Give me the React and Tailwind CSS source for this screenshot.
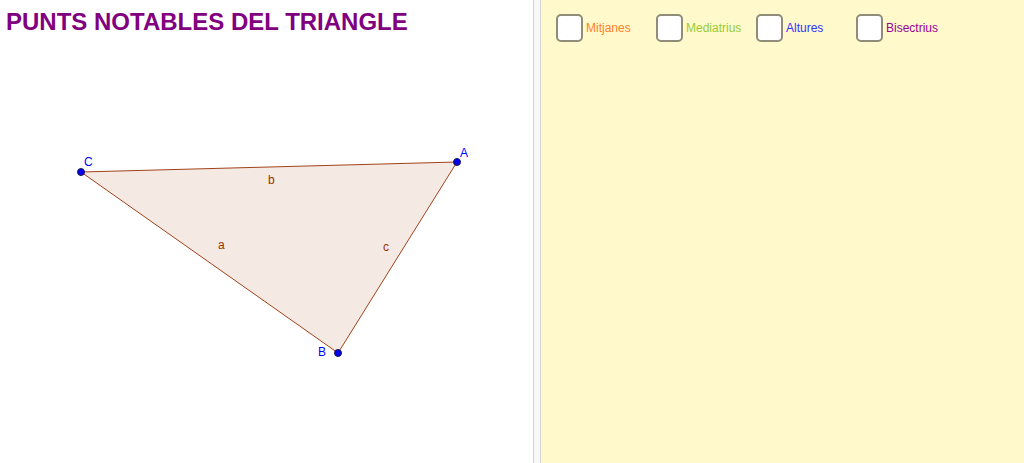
import React from "react";

const font = { fontFamily: '"Liberation Sans", Arial, sans-serif' };

const options = [
    { label: "Mitjanes", color: "text-[#ff7f2a]" },
    { label: "Mediatrius", color: "text-[#99cc33]" },
    { label: "Altures", color: "text-[#3333ff]" },
    { label: "Bisectrius", color: "text-[#990099]" },
];

function Triangle() {
    const A = [457, 162];
    const B = [338, 353];
    const C = [81, 172];
    const pts = [A, B, C].map((p) => p.join(",")).join(" ");
    return (
        <svg className="block w-full flex-1" viewBox="0 44 533 419" preserveAspectRatio="xMinYMin meet">
            <polygon points={pts} fill="#f4e9e3" stroke="#a0421a" strokeWidth="1" />
            <g fill="#993300" fontSize="12" style={font}>
                <text x="268" y="184">b</text>
                <text x="218" y="249">a</text>
                <text x="383" y="251">c</text>
            </g>
            <g fill="#0000ff" fontSize="12" style={font}>
                <text x="84" y="166">C</text>
                <text x="460" y="157">A</text>
                <text x="318" y="356">B</text>
            </g>
            {[A, B, C].map(([x, y], i) => (
                <circle key={i} cx={x} cy={y} r="3.5" fill="#0000ee" stroke="#1a1a4d" strokeWidth="1" />
            ))}
        </svg>
    );
}

export default function App() {
    return (
        <div className="flex h-[463px] w-[1024px] overflow-hidden bg-white" style={font}>
            {/* graphics view */}
            <div className="flex w-[533px] flex-col">
                <h1 className="h-[44px] pl-[6px] pt-[8px] text-[24px] font-bold leading-[28px] text-[#800080]">
                    PUNTS NOTABLES DEL TRIANGLE
                </h1>
                <Triangle />
            </div>

            {/* splitter */}
            <div className="w-[8px] border-x border-[#d3d3d3] bg-[#f8f8f8]" />

            {/* second graphics view */}
            <div className="flex-1 bg-[#fff9cc]">
                <div className="flex pl-[15px] pt-[14px]">
                    {options.map((o) => (
                        <label key={o.label} className="flex w-[100px] items-center gap-[3px]">
                            <span className="h-[28px] w-[27px] rounded-[5px] border-2 border-[#8f8c78] bg-white" />
                            <span className={`text-[12px] ${o.color}`}>{o.label}</span>
                        </label>
                    ))}
                </div>
            </div>
        </div>
    );
}
